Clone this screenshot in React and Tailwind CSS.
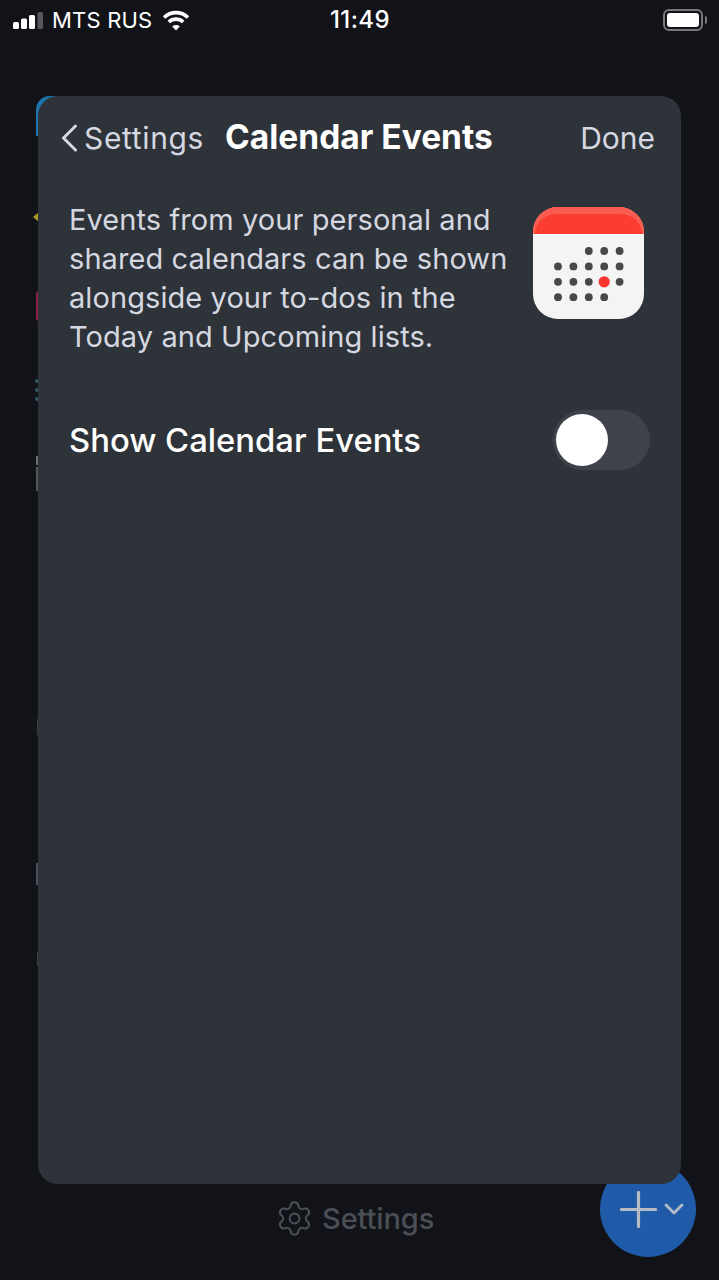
import { Settings } from 'lucide-react'

const font = { fontFamily: 'Inter, sans-serif' }

// dots of the calendar icon, rows of columns
const rows = [
  [null, null, 'd', 'd', 'd'],
  ['d', 'd', 'd', 'd', 'd'],
  ['d', 'd', 'd', 'r', 'd'],
  ['d', 'd', 'd', 'd', null],
]

const CalendarIcon = () => (
  <svg width="111" height="112" viewBox="0 0 111 112" className="shrink-0">
    <rect x="0" y="0" width="111" height="112" rx="25" fill="#f4f4f5" />
    <path d="M0 27 V25 A25 25 0 0 1 25 0 H86 A25 25 0 0 1 111 25 V27 Z" fill="#fb3c30" />
    <path d="M0 27 V25 A25 25 0 0 1 25 0 H86 A25 25 0 0 1 111 25 V27 H109 C108 15 100 7 86 7 H25 C11 7 3 15 2 27 Z" fill="#fb5c50" />
    {rows.map((row, y) =>
      row.map((dot, x) =>
        dot ? (
          <circle
            key={`${x}-${y}`}
            cx={25 + x * 15.4}
            cy={44 + y * 15.4}
            r={dot === 'r' ? 5.6 : 3.9}
            fill={dot === 'r' ? '#fb3530' : '#48484a'}
          />
        ) : null
      )
    )}
  </svg>
)

const SignalBars = () => (
  <svg width="31" height="17" viewBox="0 0 31 17">
    <rect x="0" y="10" width="6" height="7" rx="1.5" fill="#fff" />
    <rect x="8" y="6.5" width="6" height="10.5" rx="1.5" fill="#fff" />
    <rect x="16" y="3" width="6" height="14" rx="1.5" fill="#fff" />
    <rect x="24.5" y="0" width="5.5" height="17" rx="1.5" fill="#55575c" />
  </svg>
)

const Wifi = () => (
  <svg width="28" height="21" viewBox="0 0 28 21" fill="none" stroke="#fff" strokeWidth="3.6">
    <path d="M2 7.5 C9 1 19 1 26 7.5" />
    <path d="M6.8 12 C11 8.2 17 8.2 21.2 12" />
    <path d="M14 20.5 L10.2 16.4 C12.4 14.6 15.6 14.6 17.8 16.4 Z" fill="#fff" stroke="none" />
  </svg>
)

const Battery = () => (
  <div className="flex items-center gap-[2px]">
    <div className="w-[40px] h-[22px] rounded-[6px] border-2 border-[#77787b] p-[2px]">
      <div className="w-full h-full rounded-[3px] bg-white" />
    </div>
    <div className="w-[2px] h-[8px] rounded-r-sm bg-[#77787b]" />
  </div>
)

export default function App() {
  return (
    <div
      className="relative w-[719px] h-[1280px] overflow-hidden bg-[#111318] flex flex-col"
      style={font}
    >
      {/* status bar */}
      <div className="h-[40px] pl-[13px] pr-[12px] flex items-center justify-between text-white text-[22px]">
        <div className="w-[200px] flex items-center">
          <SignalBars />
          <span className="ml-[8px] tracking-[0.2px]">MTS RUS</span>
          <span className="ml-[10px]"><Wifi /></span>
        </div>
        <span className="text-[24px] font-medium tracking-[0.4px]">11:49</span>
        <div className="w-[200px] flex justify-end"><Battery /></div>
      </div>

      {/* list hidden behind the sheet, only the edges show */}
      <div className="absolute left-[36px] top-[96px] w-[20px] h-[40px] rounded-tl-[14px] bg-[#1b76ad]" />
      <div className="absolute left-[33px] top-[212px] w-0 h-0 border-y-[5px] border-y-transparent border-r-[6px] border-r-[#a99a24]" />
      <div className="absolute left-[36px] top-[291px] w-[4px] h-[30px] rounded-l-[3px] bg-[#8b2148]" />
      <div className="absolute left-[35px] top-[379px] w-[4px] flex flex-col gap-[5px]">
        <div className="h-[4px] rounded-full bg-[#2f5a68]" />
        <div className="h-[4px] rounded-full bg-[#2f5a68]" />
        <div className="h-[4px] rounded-full bg-[#2f5a68]" />
      </div>
      <div className="absolute left-[36px] top-[456px] w-[3px] flex flex-col gap-[2px]">
        <div className="h-[9px] bg-[#6a6b6e]" />
        <div className="h-[24px] bg-[#55565a]" />
      </div>
      <div className="absolute left-[37px] top-[719px] w-[2px] h-[16px] bg-[#3c3e44]" />
      <div className="absolute left-[36px] top-[863px] w-[3px] h-[22px] bg-[#4a4d55]" />
      <div className="absolute left-[37px] top-[952px] w-[2px] h-[14px] bg-[#3c3e44]" />

      {/* footer */}
      <div className="mt-auto h-[97px] pt-[18px] pl-[275px] flex items-start gap-[8px] text-[#4b4e55]">
        <Settings size={39} strokeWidth={1.25} className="-mt-[2px]" />
        <span className="text-[29px] leading-[36px] font-medium -tracking-[0.1px]">Settings</span>
      </div>

      {/* add button */}
      <div className="absolute left-[600px] top-[1161px] w-[96px] h-[96px] rounded-full bg-[#1f5ba8] flex items-center pl-[20px] gap-[7px]">
        <svg width="37" height="37" viewBox="0 0 37 37" stroke="#b5bcc6" strokeWidth="3.2" strokeLinecap="round">
          <path d="M18.5 1.5 V35.5 M1.5 18.5 H35.5" />
        </svg>
        <svg width="20" height="12" viewBox="0 0 20 12" fill="none" stroke="#b5bcc6" strokeWidth="2.8" strokeLinecap="round" strokeLinejoin="round">
          <path d="M2 2 L10 10 L18 2" />
        </svg>
      </div>

      {/* sheet */}
      <div className="absolute left-[38px] top-[96px] w-[643px] h-[1088px] rounded-[20px] bg-[#2e3239]">
        <div className="h-[84px] flex items-center">
          <svg width="17" height="28" viewBox="0 0 17 28" fill="none" stroke="#d5d8e0" strokeWidth="3" strokeLinecap="round" strokeLinejoin="round" className="ml-[23px]">
            <path d="M14.5 2 L2.5 14 L14.5 26" />
          </svg>
          <span className="ml-[6px] text-[30px] tracking-[0.65px] text-[#d5d8e0]">Settings</span>
          <span className="ml-[21px] -mt-[2px] text-[33.5px] font-bold text-white">Calendar Events</span>
          <span className="ml-auto mr-[26px] text-[30px] text-[#d5d8e0]">Done</span>
        </div>

        <div className="mt-[22px] pl-[31px] pr-[37px] flex justify-between items-start">
          <p className="-mt-[0.6px] text-[29px] leading-[38.8px] text-[#d5d8e0] tracking-[0.08px]">
            Events from your personal and
            <br />
            shared calendars can be shown
            <br />
            alongside your to-dos in the
            <br />
            Today and Upcoming lists.
          </p>
          <div className="mt-[5px]"><CalendarIcon /></div>
        </div>

        <div className="mt-[53px] pl-[31px] pr-[31px] flex items-center justify-between">
          <span className="mt-[2px] text-[32.8px] font-medium text-white">Show Calendar Events</span>
          <div className="w-[97px] h-[60px] rounded-full bg-[#3f424a] p-[3px]">
            <div className="w-[52px] h-[52px] mt-[1px] rounded-full bg-white" />
          </div>
        </div>
      </div>
    </div>
  )
}
